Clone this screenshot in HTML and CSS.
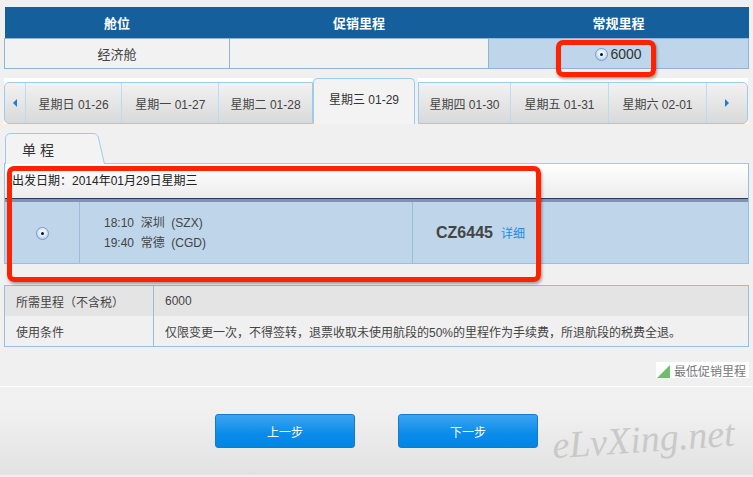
FILE: index.html
```html
<!DOCTYPE html>
<html lang="zh-CN">
<head>
    <meta charset="UTF-8">
    <meta name="viewport" content="width=device-width, initial-scale=1.0">
    <title>里程兑换 - 选择航班</title>
    <link rel="stylesheet" href="styles.css">
</head>
<body>
    <div class="main">
        <table class="cabin">
            <tr>
                <th class="c1">舱位</th>
                <th class="c2">促销里程</th>
                <th class="c3">常规里程</th>
            </tr>
            <tr>
                <td>经济舱</td>
                <td></td>
                <td class="selected"><span class="radio"></span>6000</td>
            </tr>
        </table>

        <div class="dates">
            <div class="group-wrap left">
                <div class="group">
                    <div class="day arrow"><span class="tri-left"></span></div>
                    <div class="day w97">星期日 01-26</div>
                    <div class="day w97">星期一 01-27</div>
                    <div class="day w94">星期二 01-28</div>
                </div>
            </div>
            <div class="day-active">星期三 01-29</div>
            <div class="group-wrap right">
                <div class="group">
                    <div class="day w91">星期四 01-30</div>
                    <div class="day w97">星期五 01-31</div>
                    <div class="day w97">星期六 02-01</div>
                    <div class="day arrow wide"><span class="tri-right"></span></div>
                </div>
            </div>
        </div>

        <div class="trip-tab">
            <svg class="tab-shape" width="100" height="31" viewBox="0 0 100 31">
                <path d="M0.5 31 V6 Q0.5 0.5 6 0.5 H88 Q92.5 0.5 93.5 5 L99.5 31" fill="#f3f3f3" stroke="#9ccbf0"/>
            </svg>
            <span>单 程</span>
        </div>
        <div class="trip">
            <div class="trip-head">出发日期：2014年01月29日星期三</div>
            <div class="flight">
                <div class="pick"><span class="radio"></span></div>
                <div class="times">
                    <div>18:10&nbsp; 深圳 &nbsp;(SZX)</div>
                    <div>19:40&nbsp; 常德 &nbsp;(CGD)</div>
                </div>
                <div class="number"><b>CZ6445</b><a href="#">详细</a></div>
            </div>
        </div>

        <table class="info">
            <colgroup>
                <col class="k-col">
                <col>
            </colgroup>
            <tr>
                <td>所需里程（不含税）</td>
                <td>6000</td>
            </tr>
            <tr>
                <td>使用条件</td>
                <td>仅限变更一次，不得签转，退票收取未使用航段的50%的里程作为手续费，所退航段的税费全退。</td>
            </tr>
        </table>

        <div class="legend-row">
            <div class="legend"><span class="green"></span>最低促销里程</div>
        </div>
    </div>

    <div class="footer">
        <button class="btn">上一步</button>
        <button class="btn">下一步</button>
        <div class="watermark">eLvXing.net</div>
    </div>

    <div class="mark mark-price"></div>
    <div class="mark mark-flight"></div>
</body>
</html>
```

FILE: styles.css
```css
body {
    margin: 0;
    height: 477px;
    overflow: hidden;
    position: relative;
    background-color: #f0f0f0;
    font-family: "Liberation Sans", "Noto Sans CJK SC", sans-serif;
    font-size: 12px;
    color: #444;
}
.main {
    padding: 7px 4px 0;
}

/* cabin table */
.cabin {
    width: 745px;
    border-collapse: collapse;
    table-layout: fixed;
}
.cabin th {
    height: 31px;
    padding: 0;
    background-color: #15609c;
    color: #fff;
    font-size: 13px;
    font-weight: bold;
}
.cabin .c1 { width: 225px; }
.cabin .c2 { width: 259px; }
.cabin td {
    height: 29px;
    padding: 0;
    text-align: center;
    border: 1px solid #92b3d3;
    background-color: #f2f2f2;
    font-size: 13px;
}
.cabin td.selected {
    background-color: #bed5ea;
    font-size: 14px;
    color: #333;
}
.cabin td.selected .radio {
    margin-right: 2px;
    vertical-align: -2px;
}

.radio {
    display: inline-block;
    position: relative;
    width: 13px;
    height: 13px;
    box-sizing: border-box;
    border-radius: 50%;
    border: 1px solid #7d9cc4;
    background: radial-gradient(circle at 50% 40%, #ffffff 0%, #dbeafa 45%, #8dbdf0 100%);
}
.radio::after {
    content: "";
    position: absolute;
    left: 4px;
    top: 4px;
    width: 3px;
    height: 3px;
    border-radius: 50%;
    background-color: #111;
}

/* date tabs */
.dates {
    display: flex;
    margin-top: 9px;
    height: 46px;
}
.group-wrap {
    background-color: #fff;
    padding-top: 4px;
    box-sizing: border-box;
}
.group-wrap.left { width: 309px; }
.group-wrap.right { width: 330px; margin-left: 3px; }
.group {
    display: flex;
    height: 42px;
    box-sizing: border-box;
    border: 1px solid #9ccbf0;
    background: linear-gradient(#f2f2f2, #d9d9d9);
}
.left .group { border-radius: 5px 0 0 5px; }
.right .group { border-radius: 0 5px 5px 0; }
.day {
    display: flex;
    align-items: center;
    justify-content: center;
    color: #444;
    font-size: 12px;
    border-left: 1px solid #b9dbf5;
}
.day:first-child { border-left: none; }
.day.w97 { width: 97px; }
.day.w94 { width: 94px; }
.day.w91 { width: 91px; }
.day.arrow { width: 20px; }
.day.arrow.wide { flex: 1; }
.tri-left, .tri-right {
    width: 0;
    height: 0;
    border-top: 4px solid transparent;
    border-bottom: 4px solid transparent;
}
.tri-left { border-right: 4px solid #1a80d6; }
.tri-right { border-left: 4px solid #1a80d6; }
.day-active {
    width: 102px;
    box-sizing: border-box;
    border: 1px solid #9ccbf0;
    border-bottom: none;
    border-radius: 5px 5px 0 0;
    background-color: #f3f3f3;
    text-align: center;
    padding-top: 13px;
    line-height: 16px;
    font-size: 12px;
    color: #333;
}

/* trip */
.trip-tab {
    position: relative;
    width: 100px;
    height: 31px;
    margin: 9px 0 0 1px;
}
.tab-shape {
    position: absolute;
    left: 0;
    top: 0;
}
.trip-tab span {
    position: relative;
    display: block;
    padding: 6px 0 0 17px;
    font-size: 14px;
    color: #333;
}
.trip {
    border: 1px solid #8cc3ea;
    border-top-color: #9ccbf0;
    margin-top: -1px;
}
.trip-head {
    height: 34px;
    line-height: 34px;
    padding-left: 7px;
    background: linear-gradient(#ffffff, #ececec);
    border-bottom: 1px solid #2b3b66;
    color: #222;
}
.flight {
    display: flex;
    height: 61px;
    border-top: 3px solid #8193ae;
    background-color: #bed5ea;
}
.pick {
    width: 74px;
    display: flex;
    align-items: center;
    justify-content: center;
    border-right: 1px solid #9dbcd8;
    padding-top: 1px;
}
.times {
    width: 333px;
    display: flex;
    flex-direction: column;
    justify-content: center;
    padding-left: 24px;
    box-sizing: border-box;
    border-right: 1px solid #9dbcd8;
    line-height: 20px;
    color: #444;
}
.number {
    display: flex;
    align-items: center;
    padding-left: 23px;
}
.number b {
    font-size: 16px;
    color: #444;
}
.number a {
    margin-left: 8px;
    color: #2a8ad8;
    text-decoration: none;
    font-size: 12px;
}

/* info */
.info {
    width: 745px;
    margin-top: 21px;
    border-collapse: collapse;
    table-layout: fixed;
}
.info .k-col {
    width: 149px;
}
.info td {
    height: 30px;
    padding: 0 0 0 11px;
    white-space: nowrap;
    border: 1px solid #9bbcdb;
    border-top: none;
    border-bottom: none;
    color: #444;
}
.info tr:first-child td {
    background-color: #e4e4e4;
    border-top: 1px solid #9bbcdb;
}
.info tr:last-child td {
    border-bottom: 1px solid #9bbcdb;
}

.legend-row {
    display: flex;
    justify-content: flex-end;
    margin-top: 15px;
}
.legend {
    display: flex;
    align-items: center;
    height: 16px;
    padding: 0 3px 0 1px;
    background-color: #fff;
    color: #777;
    font-size: 12px;
}
.legend .green {
    width: 0;
    height: 0;
    border-left: 13px solid transparent;
    border-bottom: 13px solid #6dbf6f;
    margin: 2px 4px 0 0;
}

/* footer */
.footer {
    position: relative;
    margin-top: 8px;
    height: 89px;
    border-top: 1px solid #fff;
    background: linear-gradient(#f1f1f1, #f0f0f0 30%, #e2e2e2);
    display: flex;
    align-items: flex-start;
    padding: 27px 0 0 215px;
    box-sizing: border-box;
}
.btn {
    width: 140px;
    height: 34px;
    margin-right: 43px;
    border: 1px solid #1479d2;
    border-radius: 3px;
    background: linear-gradient(#3ba4f1, #0a8be9 60%, #0086e6);
    color: #fff;
    font-family: "Liberation Sans", "Noto Sans CJK SC", sans-serif;
    font-size: 12px;
    cursor: pointer;
}
.watermark {
    position: absolute;
    left: 552px;
    top: 30px;
    font-family: "Liberation Serif", serif;
    font-style: italic;
    font-size: 38px;
    color: #c9c9c9;
    transform: rotate(-4deg);
}

/* red highlight boxes */
.mark {
    position: absolute;
    border: 5px solid #ff2200;
    border-radius: 7px;
    box-shadow: 1px 2px 3px rgba(0, 0, 0, 0.35);
    box-sizing: border-box;
}
.mark-price {
    left: 556px;
    top: 40px;
    width: 100px;
    height: 37px;
}
.mark-flight {
    left: 7px;
    top: 166px;
    width: 534px;
    height: 116px;
}
```
